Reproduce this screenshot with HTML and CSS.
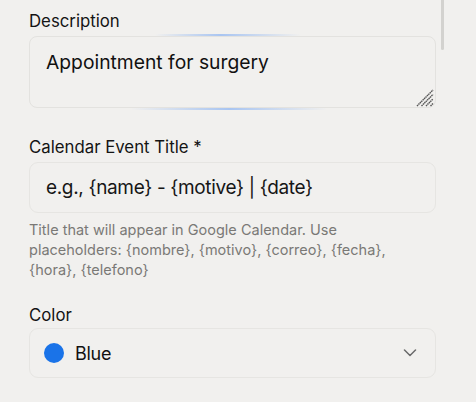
FILE: index.html
```html
<!DOCTYPE html>
<html lang="en">
<head>
<meta charset="utf-8">
<link rel="stylesheet" href="styles.css">
</head>
<body>
<div class="panel">
  <div class="form">
    <div class="field">
      <label class="label" for="desc">Description</label>
      <div class="area-wrap">
        <span class="glow glow-top"></span>
        <textarea id="desc" class="area">Appointment for surgery</textarea>
        <span class="glow glow-bottom"></span>
        <svg class="grip" width="18" height="18" viewBox="0 0 18 18" aria-hidden="true">
          <path d="M1 17 L17 1 M5.5 17 L17 5.5 M10 17 L17 10 M14.5 17 L17 14.5" stroke="#555" stroke-width="1.4" stroke-dasharray="1.5 0.5" fill="none"/>
        </svg>
      </div>
    </div>

    <div class="field field-title">
      <label class="label" for="title">Calendar Event Title *</label>
      <input id="title" class="input" type="text" placeholder="e.g., {name} - {motive} | {date}">
      <p class="help">Title that will appear in Google Calendar. Use placeholders: {nombre}, {motivo}, {correo}, {fecha}, {hora}, {telefono}</p>
    </div>

    <div class="field field-color">
      <span class="label label-tight">Color</span>
      <div class="select">
        <span class="dot"></span>
        <span class="select-text">Blue</span>
        <svg class="chev" width="14" height="8" viewBox="0 0 14 8" aria-hidden="true">
          <path d="M1.5 1 L7 6.5 L12.5 1" stroke="#6a6a6a" stroke-width="1.5" fill="none" stroke-linecap="round" stroke-linejoin="round"/>
        </svg>
      </div>
    </div>
  </div>
  <div class="scrollbar"></div>
</div>
</body>
</html>
```

FILE: styles.css
```css
* { box-sizing: border-box; }
html, body {
  margin: 0;
  padding: 0;
  background: #f1f0ee;
  font-family: Inter, "Liberation Sans", sans-serif;
  color: #111;
}
.panel {
  position: relative;
  width: 476px;
  height: 402px;
  overflow: hidden;
}
.form {
  width: 407px;
  margin-left: 29px;
  padding-top: 9px;
  display: flex;
  flex-direction: column;
}
.field {
  display: flex;
  flex-direction: column;
}
.label {
  font-size: 16.8px;
  line-height: 24px;
  color: #141414;
  margin-bottom: 3px;
}
.label-tight {
  margin-bottom: 1px;
}
.area-wrap {
  position: relative;
}
.area {
  display: block;
  width: 100%;
  height: 72px;
  resize: none;
  border: 1px solid #e3e2df;
  border-radius: 8px;
  background: #f1f0ee;
  font-family: inherit;
  font-size: 19.3px;
  line-height: 26px;
  color: #111;
  padding: 12px 16px 10px;
  outline: none;
}
.glow {
  position: absolute;
  height: 2px;
  border-radius: 1px;
  pointer-events: none;
}
.glow-top {
  top: -2px;
  left: 126px;
  width: 146px;
  background: linear-gradient(90deg, rgba(168,196,240,0), #a9c5f1 45%, rgba(168,196,240,0));
}
.glow-bottom {
  bottom: -2px;
  left: 102px;
  width: 196px;
  background: linear-gradient(90deg, rgba(168,196,240,0), #a9c5f1 50%, rgba(168,196,240,0));
}
.grip {
  position: absolute;
  right: 2px;
  bottom: 1px;
}
.field-title {
  margin-top: 27px;
}
.input {
  display: block;
  width: 100%;
  height: 51px;
  border: 1px solid #e6e5e2;
  border-radius: 9px;
  background: #f1f0ee;
  font-family: inherit;
  font-size: 19px;
  letter-spacing: -0.35px;
  color: #111;
  padding: 0 16px;
  outline: none;
}
.input::placeholder {
  color: #161616;
  opacity: 1;
}
.help {
  margin: 7px 0 0;
  max-width: 385px;
  font-size: 14.5px;
  line-height: 20px;
  color: #7a7976;
}
.field-color {
  margin-top: 23px;
}
.select {
  display: flex;
  align-items: center;
  height: 50px;
  border: 1px solid #e6e5e2;
  border-radius: 9px;
  padding: 0 18px 0 14px;
}
.dot {
  width: 20px;
  height: 20px;
  border-radius: 50%;
  background: #1a73e8;
  flex: none;
}
.select-text {
  margin-left: 11px;
  font-size: 18px;
  letter-spacing: -0.3px;
  flex: 1;
}
.chev { flex: none; }
.scrollbar {
  position: absolute;
  top: 0;
  left: 441px;
  width: 3px;
  height: 50px;
  background: #d3d2cf;
  border-radius: 0 0 2px 2px;
}
```
